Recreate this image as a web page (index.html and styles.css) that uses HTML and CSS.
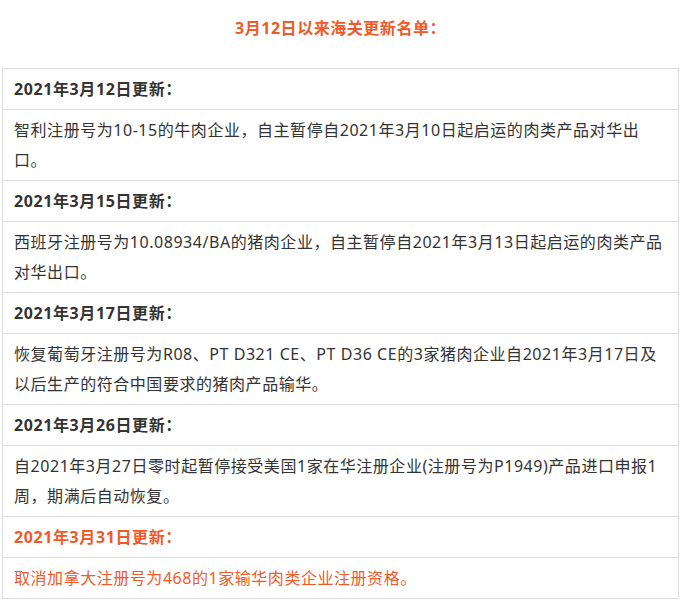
FILE: index.html
```html
<!DOCTYPE html>
<html lang="zh-CN">
<head>
<meta charset="utf-8">
<title>3月12日以来海关更新名单</title>
<link rel="stylesheet" href="styles.css">
</head>
<body>
<div class="page">
  <h2 class="title">3月12日以来海关更新名单：</h2>
  <table class="list">
    <tbody>
      <tr><td class="date">2021年3月12日更新：</td></tr>
      <tr><td class="desc">智利注册号为10-15的牛肉企业，自主暂停自2021年3月10日起启运的肉类产品对华出口。</td></tr>
      <tr><td class="date">2021年3月15日更新：</td></tr>
      <tr><td class="desc">西班牙注册号为10.08934/BA的猪肉企业，自主暂停自2021年3月13日起启运的肉类产品对华出口。</td></tr>
      <tr><td class="date">2021年3月17日更新：</td></tr>
      <tr><td class="desc">恢复葡萄牙注册号为R08、PT D321 CE、PT D36 CE的3家猪肉企业自2021年3月17日及以后生产的符合中国要求的猪肉产品输华。</td></tr>
      <tr><td class="date">2021年3月26日更新：</td></tr>
      <tr><td class="desc">自2021年3月27日零时起暂停接受美国1家在华注册企业(注册号为P1949)产品进口申报1周，期满后自动恢复。</td></tr>
      <tr><td class="date hl">2021年3月31日更新：</td></tr>
      <tr><td class="desc hl">取消加拿大注册号为468的1家输华肉类企业注册资格。</td></tr>
    </tbody>
  </table>
</div>
</body>
</html>
```
FILE: styles.css
```css
html, body {
  margin: 0;
  padding: 0;
  background: #fff;
}
.page {
  padding: 0 2px;
  font-family: "Noto Sans", "Noto Sans CJK SC", sans-serif;
  color: #333;
}
.title {
  margin: 13px 0 25px;
  font-size: 16px;
  line-height: 30px;
  font-weight: bold;
  letter-spacing: 0.544px;
  text-align: center;
  color: #f05a28;
}
.list {
  width: 100%;
  border-collapse: collapse;
}
.list td {
  border: 1px solid #dcdcdc;
  padding: 5px 8px 5px 11px;
  font-size: 16px;
  line-height: 30px;
  vertical-align: top;
}
.date {
  font-weight: bold;
  letter-spacing: 0.6px;
}
.desc {
  letter-spacing: 0.544px;
}
.hl {
  color: #f05a28;
}
```
